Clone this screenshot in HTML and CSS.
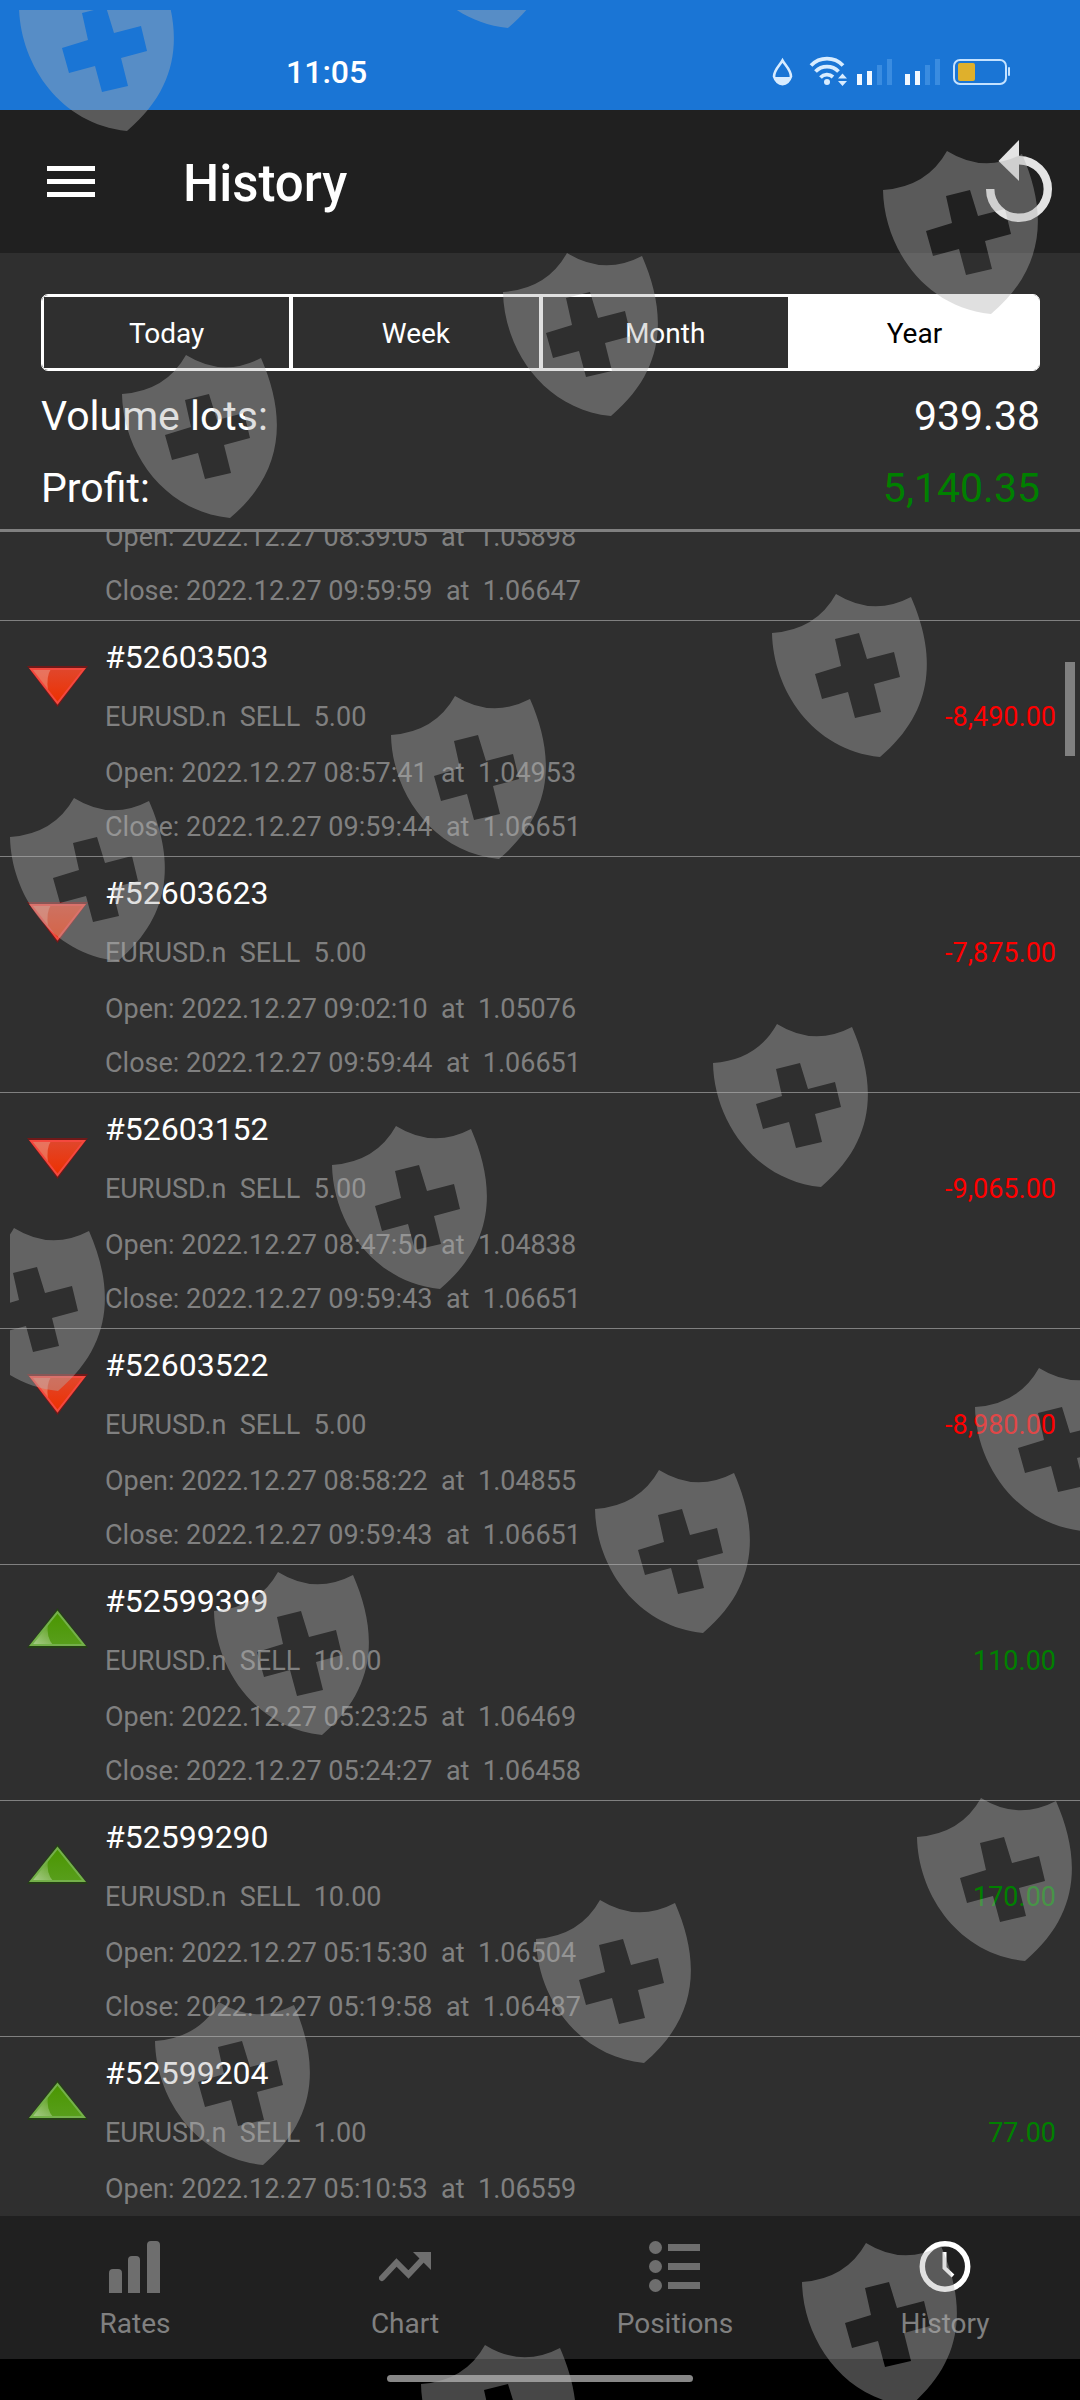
FILE: index.html
```html
<!DOCTYPE html>
<html lang="en">
<head>
    <meta charset="UTF-8">
    <meta name="viewport" content="width=device-width, initial-scale=1.0">
    <title>History</title>
    <link rel="stylesheet" href="styles.css">
</head>
<body>
    <!-- shared shapes -->
    <svg class="defs" aria-hidden="true">
        <defs>
            <linearGradient id="redFill" x1="0" y1="0" x2="0" y2="1">
                <stop offset="0" stop-color="#e0472c"/>
                <stop offset="1" stop-color="#ee3000"/>
            </linearGradient>
            <linearGradient id="greenFill" x1="0" y1="0" x2="0" y2="1">
                <stop offset="0" stop-color="#4a9600"/>
                <stop offset="1" stop-color="#589e1c"/>
            </linearGradient>
            <linearGradient id="shine" x1="1" y1="0" x2="0" y2="1">
                <stop offset="0" stop-color="#fff" stop-opacity=".05"/>
                <stop offset="1" stop-color="#fff" stop-opacity=".5"/>
            </linearGradient>
            <symbol id="loss" viewBox="0 0 64 48">
                <path d="M1 7H62L31.500 48Z" fill="#8a1010" opacity=".7"/>
                <path d="M5 10H58L31.500 44Z" fill="url(#redFill)"/>
                <path d="M5 10H25Q20 17 22 32Z" fill="#fff" opacity=".25"/>
                <path d="M5 10H58L31.500 44Z" fill="none" stroke="#f4483e" stroke-width="2"/>
            </symbol>
            <symbol id="gain" viewBox="0 0 64 48">
                <path d="M1 45H62L31.500 5Z" fill="#1f4a08" opacity=".6"/>
                <path d="M5 42H58L31.500 9Z" fill="url(#greenFill)"/>
                <path d="M5 42H27Q20 34 22 21Z" fill="url(#shine)"/>
                <path d="M5 42H58L31.500 9Z" fill="none" stroke="#74b04a" stroke-width="2"/>
            </symbol>
            <g id="shield">
                <path fill-rule="evenodd" d="M-64 39Q-20 36 0 0Q37 23 75 3C99 58 101 115 44 163C-24 156 -63 95 -64 39ZM-1 45L5 72L-21 80L-14 105L12 98L19 124L45 118L38 90L64 83L58 58L31 65L23 39Z"/>
            </g>
        </defs>
    </svg>

    <div class="app">
        <div class="status-bar">
            <span class="time">11:05</span>
            <div class="status-icons">
                <svg width="29" height="32" viewBox="0 0 29 32">
                    <path d="M11.500 4.500C9 9 3 14 3 20.500A8.800 8.800 0 0 0 20 20.500C20 14 14 9 11.500 4.500Z" fill="none" stroke="#d8ecff" stroke-width="2.600"/>
                    <path d="M3 21H20A8.500 8.500 0 0 1 3 21Z" fill="#d8ecff"/>
                </svg>
                <svg width="38" height="32" viewBox="0 0 38 32">
                    <g fill="none" stroke="#d8ecff" stroke-width="3.800">
                        <path d="M2 9.500A22 22 0 0 1 34 9.500"/>
                        <path d="M6.500 15.500A16 16 0 0 1 29.500 15.500"/>
                        <path d="M11.500 21.500A9 9 0 0 1 24 21"/>
                    </g>
                    <circle cx="18" cy="26" r="3" fill="#d8ecff"/>
                    <path d="M29 22.500L33.500 17.500L38 22.500ZM29 25L33.500 30L38 25Z" fill="#d8ecff"/>
                </svg>
                <svg width="39" height="32" viewBox="0 0 39 32">
                    <path d="M1 18H6V29H1ZM11 15H16V29H11Z" fill="#f2f8ff"/>
                    <path d="M21 9H26V29H21ZM31 3H36V29H31Z" fill="#3a8ce0"/>
                </svg>
                <svg width="39" height="32" viewBox="0 0 39 32">
                    <path d="M1 18H6V29H1ZM11 15H16V29H11Z" fill="#f2f8ff"/>
                    <path d="M21 9H26V29H21ZM31 3H36V29H31Z" fill="#3a8ce0"/>
                </svg>
                <svg width="60" height="32" viewBox="0 0 60 32">
                    <rect x="2" y="4" width="52" height="24" rx="6" fill="none" stroke="#c4e2ff" stroke-width="2"/>
                    <rect x="6" y="7" width="17" height="18" rx="2" fill="#dfb02c"/>
                    <rect x="56" y="11" width="2" height="9" rx="1" fill="#c4e2ff"/>
                </svg>
            </div>
        </div>

        <header class="header">
            <button class="icon-btn" aria-label="Menu">
                <svg width="48" height="32" viewBox="0 0 48 32" fill="#fff">
                    <path d="M0 0H48V5H0ZM0 13H48V18H0ZM0 26H48V31H0Z"/>
                </svg>
            </button>
            <h1>History</h1>
            <button class="icon-btn refresh" aria-label="Refresh">
                <svg width="66" height="84" viewBox="0 0 66 84">
                    <path d="M4.200 49A28.800 28.800 0 1 0 33 20.200" fill="none" stroke="#e4e4e4" stroke-width="8.400"/>
                    <path d="M12.500 21L33 0V41Z" fill="#e4e4e4"/>
                </svg>
            </button>
        </header>

        <section class="summary">
            <div class="tabs">
                <button>Today</button>
                <button>Week</button>
                <button>Month</button>
                <button class="active">Year</button>
            </div>
            <div class="total"><span>Volume lots:</span><span>939.38</span></div>
            <div class="total"><span>Profit:</span><span class="green">5,140.35</span></div>
        </section>

        <main class="orders">
            <div class="scrollbar"></div>
            <ul>
                <li class="order cut">
                    <div class="info">
                        <p>Open: 2022.12.27 08:39:05  at  1.05898</p>
                        <p class="close">Close: 2022.12.27 09:59:59  at  1.06647</p>
                    </div>
                </li>
                <li class="order">
                    <svg class="arrow"><use href="#loss"/></svg>
                    <div class="info">
                        <h2>#52603503</h2>
                        <p>EURUSD.n  SELL  5.00</p>
                        <p>Open: 2022.12.27 08:57:41  at  1.04953</p>
                        <p class="close">Close: 2022.12.27 09:59:44  at  1.06651</p>
                    </div>
                    <span class="amount red">-8,490.00</span>
                </li>
                <li class="order">
                    <svg class="arrow"><use href="#loss"/></svg>
                    <div class="info">
                        <h2>#52603623</h2>
                        <p>EURUSD.n  SELL  5.00</p>
                        <p>Open: 2022.12.27 09:02:10  at  1.05076</p>
                        <p class="close">Close: 2022.12.27 09:59:44  at  1.06651</p>
                    </div>
                    <span class="amount red">-7,875.00</span>
                </li>
                <li class="order">
                    <svg class="arrow"><use href="#loss"/></svg>
                    <div class="info">
                        <h2>#52603152</h2>
                        <p>EURUSD.n  SELL  5.00</p>
                        <p>Open: 2022.12.27 08:47:50  at  1.04838</p>
                        <p class="close">Close: 2022.12.27 09:59:43  at  1.06651</p>
                    </div>
                    <span class="amount red">-9,065.00</span>
                </li>
                <li class="order">
                    <svg class="arrow"><use href="#loss"/></svg>
                    <div class="info">
                        <h2>#52603522</h2>
                        <p>EURUSD.n  SELL  5.00</p>
                        <p>Open: 2022.12.27 08:58:22  at  1.04855</p>
                        <p class="close">Close: 2022.12.27 09:59:43  at  1.06651</p>
                    </div>
                    <span class="amount red">-8,980.00</span>
                </li>
                <li class="order">
                    <svg class="arrow"><use href="#gain"/></svg>
                    <div class="info">
                        <h2>#52599399</h2>
                        <p>EURUSD.n  SELL  10.00</p>
                        <p>Open: 2022.12.27 05:23:25  at  1.06469</p>
                        <p class="close">Close: 2022.12.27 05:24:27  at  1.06458</p>
                    </div>
                    <span class="amount green">110.00</span>
                </li>
                <li class="order">
                    <svg class="arrow"><use href="#gain"/></svg>
                    <div class="info">
                        <h2>#52599290</h2>
                        <p>EURUSD.n  SELL  10.00</p>
                        <p>Open: 2022.12.27 05:15:30  at  1.06504</p>
                        <p class="close">Close: 2022.12.27 05:19:58  at  1.06487</p>
                    </div>
                    <span class="amount green">170.00</span>
                </li>
                <li class="order last">
                    <svg class="arrow"><use href="#gain"/></svg>
                    <div class="info">
                        <h2>#52599204</h2>
                        <p>EURUSD.n  SELL  1.00</p>
                        <p>Open: 2022.12.27 05:10:53  at  1.06559</p>
                    </div>
                    <span class="amount green">77.00</span>
                </li>
            </ul>
        </main>

        <nav class="bottom-nav">
            <a href="#rates">
                <svg width="52" height="52" viewBox="0 0 52 52">
                    <path d="M0 52V32Q0 28 4 28H9Q13 28 13 32V52ZM19 52V19Q19 15 23 15H27Q31 15 31 19V52ZM38 52V4Q38 0 42 0H47Q51 0 51 4V52Z"/>
                </svg>
                Rates
            </a>
            <a href="#chart">
                <svg width="52" height="52" viewBox="0 0 52 52">
                    <path d="M3 37L17.500 21.500L29.500 33.500L44 18" fill="none" stroke="#6e6e6e" stroke-width="6" stroke-linecap="round"/>
                    <path d="M34 11H52V29Z"/>
                </svg>
                Chart
            </a>
            <a href="#positions">
                <svg width="52" height="52" viewBox="0 0 52 52">
                    <circle cx="6.500" cy="6.500" r="6.500"/>
                    <circle cx="6.500" cy="25.500" r="6.500"/>
                    <circle cx="6.500" cy="44.500" r="6.500"/>
                    <path d="M19 3H51V10H19ZM19 22H51V29H19ZM19 41H51V48H19Z"/>
                </svg>
                Positions
            </a>
            <a href="#history">
                <svg width="52" height="52" viewBox="0 0 52 52">
                    <g fill="none" stroke="#fff">
                        <circle cx="26" cy="25.500" r="22.700" stroke-width="5.500"/>
                        <path d="M25.500 11V27L34 35" stroke-width="4"/>
                    </g>
                </svg>
                History
            </a>
        </nav>
        <div class="gesture"><span></span></div>

        <!-- watermark over the whole screen -->
        <svg class="watermark" aria-hidden="true">
            <use href="#shield" x="83" y="-32"/>
            <use href="#shield" x="464" y="-135"/>
            <use href="#shield" x="947" y="151"/>
            <use href="#shield" x="567" y="253"/>
            <use href="#shield" x="186" y="355"/>
            <use href="#shield" x="836" y="594"/>
            <use href="#shield" x="455" y="696"/>
            <use href="#shield" x="74" y="798"/>
            <use href="#shield" x="777" y="1024"/>
            <use href="#shield" x="396" y="1126"/>
            <use href="#shield" x="14" y="1228"/>
            <use href="#shield" x="1039" y="1368"/>
            <use href="#shield" x="659" y="1470"/>
            <use href="#shield" x="278" y="1572"/>
            <use href="#shield" x="981" y="1798"/>
            <use href="#shield" x="600" y="1900"/>
            <use href="#shield" x="219" y="2002"/>
            <use href="#shield" x="866" y="2243"/>
            <use href="#shield" x="485" y="2345"/>
        </svg>
    </div>
</body>
</html>
```
FILE: styles.css
```css
* {
    box-sizing: border-box;
}
body {
    margin: 0;
    font-family: Roboto, "Liberation Sans", sans-serif;
    font-size: 28px;
    background: #2f2f2f;
    color: #fff;
}
h1, h2, p, ul {
    margin: 0;
    padding: 0;
}
button {
    font: inherit;
    color: inherit;
    background: none;
    border: none;
    padding: 0;
    cursor: pointer;
}
svg {
    display: block;
    flex-shrink: 0;
}
.defs {
    position: absolute;
    width: 0;
    height: 0;
}
.app {
    position: relative;
    display: flex;
    flex-direction: column;
    height: 100vh;
    overflow: hidden;
}

/* status bar */
.status-bar {
    display: flex;
    align-items: center;
    justify-content: space-between;
    height: 110px;
    padding: 34px 68px 0 286px;
    background: #1a75d5;
}
.time {
    font-size: 32px;
    font-weight: 500;
}
.status-icons {
    display: flex;
    gap: 9px;
}

.header {
    display: flex;
    align-items: center;
    height: 143px;
    padding: 0 28px 0 47px;
    background: #202020;
}
.header h1 {
    flex: 1;
    margin-left: 88px;
    padding-top: 4px;
    font-size: 51px;
    font-weight: 500;
}

/* period tabs and totals */
.summary {
    padding: 41px 40px 5px 41px;
    border-bottom: 3px solid #808080;
}
.tabs {
    display: flex;
    height: 77px;
    margin-bottom: 9px;
    border: 1px solid #fff;
    border-radius: 7px;
    overflow: hidden;
}
.tabs button {
    flex: 1;
    padding-top: 2px;
    border: 2px solid #fff;
}
.tabs .active {
    background: #fff;
    color: #000;
}
.total {
    display: flex;
    justify-content: space-between;
    font-size: 41px;
    line-height: 72px;
}
.red { color: #f00; }
.green { color: #008000; }

/* order list */
.orders {
    position: relative;
    flex: 1;
    min-height: 0;
    overflow: hidden;
}
.orders ul {
    list-style: none;
}
.order {
    display: flex;
    align-items: flex-start;
    padding: 8px 24px 3px 26px;
    border-bottom: 1px solid #808080;
    font-size: 27px;
}
.order.cut {
    margin-top: -23px;
    padding-top: 0;
    padding-left: 105px;
}
.order.last {
    padding-bottom: 0;
    border-bottom: none;
}
.arrow {
    width: 64px;
    height: 48px;
    margin: 30px 15px 0 0;
}
.info {
    flex: 1;
    color: #808080;
    line-height: 56px;
}
.info p {
    white-space: pre;
}
.info h2 {
    margin-bottom: 4px;
    font-size: 32px;
    font-weight: 400;
    line-height: 56px;
    color: #fff;
}
.info .close {
    line-height: 52px;
}
.amount {
    padding-top: 60px;
    line-height: 56px;
}
.scrollbar {
    position: absolute;
    top: 130px;
    right: 5px;
    width: 10px;
    height: 94px;
    background: #808080;
}

.bottom-nav {
    display: flex;
    padding: 25px 0 17px;
    background: #202020;
}
.bottom-nav a {
    flex: 1;
    display: flex;
    flex-direction: column;
    align-items: center;
    gap: 13px;
    line-height: 36px;
    color: #808080;
    text-decoration: none;
}
.bottom-nav svg {
    fill: #6e6e6e;
}
.gesture {
    display: flex;
    justify-content: center;
    height: 41px;
    padding-top: 16px;
    background: #000;
}
.gesture span {
    width: 306px;
    height: 7px;
    border-radius: 4px;
    background: #878787;
}

.watermark {
    position: absolute;
    top: 0;
    left: 0;
    width: 100%;
    height: 100%;
    fill: #b2b2b2;
    opacity: 0.4;
    clip-path: inset(10px 0 0 10px);
    pointer-events: none;
}
```
